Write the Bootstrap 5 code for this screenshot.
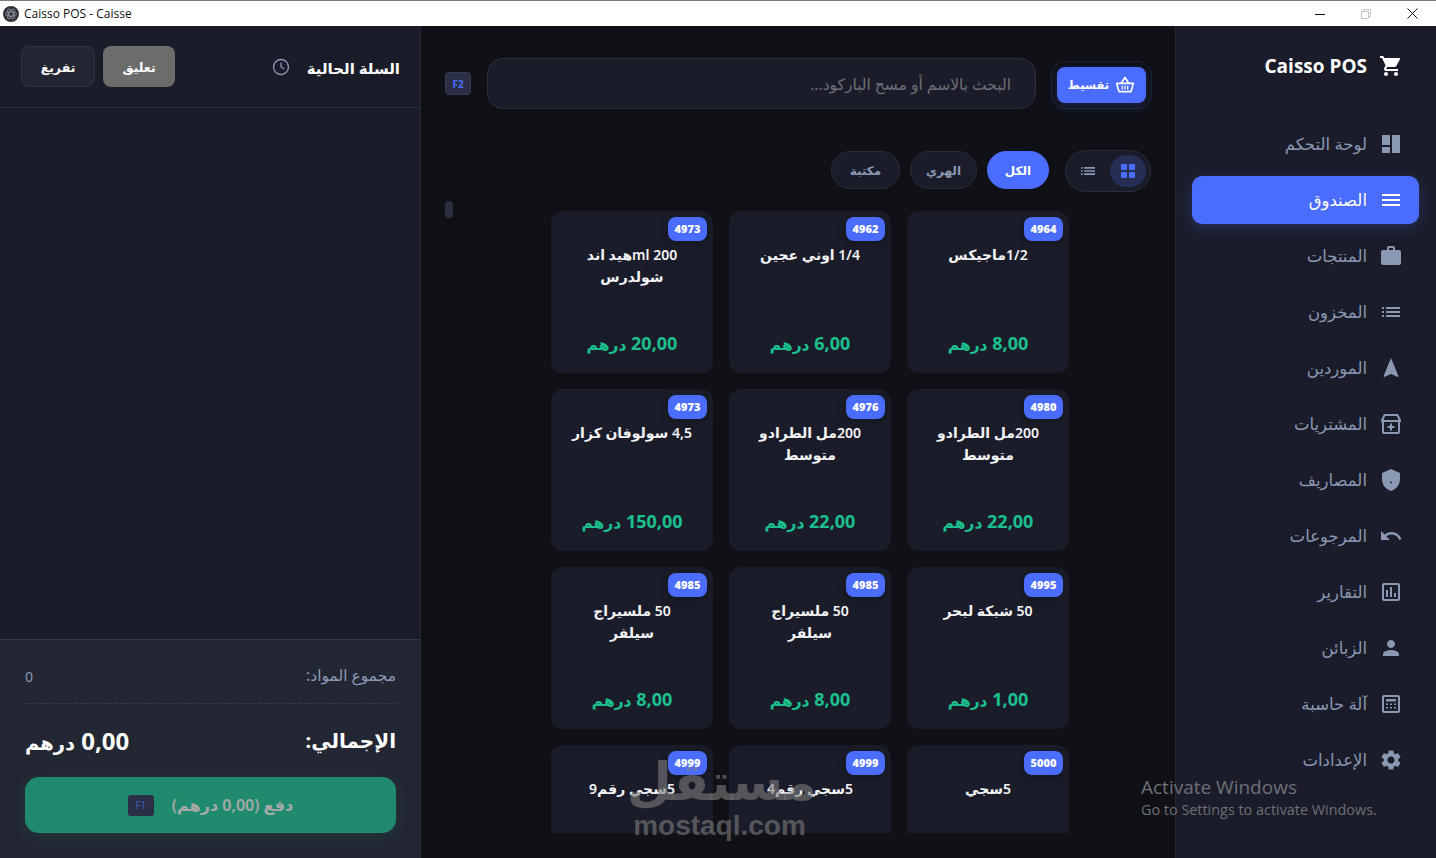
<!DOCTYPE html>
<html lang="ar" dir="rtl">
<head>
<meta charset="utf-8">
<title>Caisso POS - Caisse</title>
<link href="https://cdn.jsdelivr.net/npm/bootstrap@5.3.0/dist/css/bootstrap.min.css" rel="stylesheet">
<style>
html,body{height:100%;margin:0;overflow:hidden}
body{background:#0f1117;font-family:"Noto Sans","DejaVu Sans",sans-serif;color:#fff;width:1436px;height:858px}
.win-bar{height:26px;background:#fff;border-top:1px solid #7a7a7a;color:#111;font:12px "Open Sans",sans-serif;padding-right:1px}
.win-logo{width:16px;height:16px;margin:0 5px 0 3px;flex:none}
.win-ctl{width:46px;height:25px}
.app-body{height:832px}
.side-nav{width:261px;background:#1a1d29;border-left:1px solid #23262f;padding:0 17px 0 16px}
.brand-row{height:80px;padding-right:16px;margin-bottom:14px;color:#fff;font:700 19px "Open Sans",sans-serif;gap:12px}
.brand-row svg{width:24px;height:24px;fill:#fff}
.nav-row{height:48px;margin-bottom:8px;padding:0 16px;border-radius:10px;color:#8b98b4;font-size:16.500px;gap:12px;width:227px;text-decoration:none}
.nav-row svg{width:24px;height:24px;fill:#8b98b4;flex:none}
.nav-row.is-on{background:#4a6cff;color:#fff;box-shadow:0 4px 14px rgba(74,108,255,.25)}
.nav-row.is-on svg{fill:#fff}
.pos-main{width:754px;padding:32px 24px 0;overflow:hidden}
.search-row{height:51px}
.basket-wrap{padding:5px;border:1px solid #1f2330;border-radius:14px;margin:3px -1px 0 15px}
.basket-btn{width:89px;height:36px;padding:0;background:#4a6cff;border:0;border-radius:8px;color:#fff;font-size:11.500px;font-weight:700;box-shadow:0 4px 12px rgba(74,108,255,.2);gap:6px}
.search-box{width:549px;height:51px;background:#1a1d29;border:1px solid #2c303d;border-radius:16px;padding:2px 24px 0;color:#6e6f76;font-size:15.500px}
.kbd-tag{width:26px;height:23px;background:#2a2f45;border:1px solid #353a4e;border-radius:4px;color:#4a6cff;font:700 10px "Open Sans",sans-serif;margin-right:16px}
.filter-row{margin-top:41px;height:42px;gap:10px}
.view-tog{width:86px;height:42px;padding:4px;border:1px solid #2a2e3a;background:#1a1d29;border-radius:21px;margin-left:6px}
.view-on{width:36px;height:32px;border-radius:16px;background:#252f55}
.view-off{width:40px;height:32px;padding-right:4px}
.chip{height:38px;border-radius:19px;background:#1a1d29;border:1px solid #2a2e3a;color:#8b98b4;font-size:12px;font-weight:700;padding:2px 0 0;margin-top:-2px}
.chip.is-on{background:#4a6cff;border-color:#4a6cff;color:#fff}
.chip-all{width:62px}
.chip-a{width:67px}
.chip-b{width:69px}
.scroll-zone{margin-top:9px;height:632px;overflow:hidden}
.card-grid{display:grid;grid-template-columns:repeat(3,162px);grid-auto-rows:162px;gap:16px;padding-top:10px;margin-right:82px}
.prod-card{position:relative;background:#1a1d29;border-radius:12px;padding:33px 20px 0;text-align:center;display:flex;flex-direction:column;align-items:center}
.prod-tag{position:absolute;top:6px;right:6px;height:24px;width:39px;border-radius:8px;background:#4a6cff;color:#fff;font:800 11px/24px "Open Sans",sans-serif;text-align:center;box-shadow:0 2px 8px rgba(0,0,0,.3)}
.prod-name{font-size:14px;font-weight:600;line-height:22px;color:#f3f4f6}
.prod-price{margin-top:auto;margin-bottom:15px;font-size:18px;font-weight:700;color:#1cc08f;line-height:28px;white-space:nowrap}
.cur-txt{font-size:15.500px}
.thumb-bar{width:8px;height:17px;border-radius:4px;background:#2b3040;margin-top:0}
.cart-pane{width:421px;background:#1a1d29;border-right:1px solid #23262f}
.cart-head{height:82px;padding:0 20px 0 21px;border-bottom:1px solid #2a2e3a}
.cart-title{font-size:15px;font-weight:700;margin-left:17px;padding-top:3px}
.hold-btn,.clear-btn{height:41px;border-radius:8px;font-size:12.500px;font-weight:700;color:#fff;padding:3px 0 0}
.hold-btn{width:72px;background:#6b6d6b;border:0}
.clear-btn{width:74px;background:#232733;border:1px solid #2f3340}
.cart-empty{height:531px}
.cart-foot{height:219px;background:#232733;border-top:1px solid #363a46;padding:0 24px 0 25px;color:#8b98b4}
.count-row{height:64px;border-bottom:1px dashed #3a3e4a;font-size:14px;padding-top:9px}
.count-lbl{font-size:15.500px}
.total-row{height:73px;font-size:24px;font-weight:700;color:#fff}
.total-lbl{font-size:20px}
.total-cur{font-size:19.500px}
.pay-btn{width:371px;height:56px;border:0;border-radius:14px;background:#208a6e;color:#a7aaa9;font-size:16px;font-weight:600;box-shadow:0 4px 16px rgba(32,138,110,.15);gap:18px;padding:0}
.pay-key{width:26px;height:21px;background:#2a2f45;border-radius:3px;color:#3f5ec0;font:10px/21px "Open Sans",sans-serif;text-align:center}
.wm-activate{position:absolute;left:1141px;top:775px;direction:ltr;color:#6d7077;font:19px/24px "Open Sans",sans-serif;pointer-events:none}
.wm-activate span{display:block;font-size:14.400px;line-height:22px}
.wm-logo{position:absolute;left:622px;top:745px;width:195px;text-align:center;color:rgba(125,125,125,.6);pointer-events:none}
.wm-ar{font-size:52px;font-weight:700;line-height:70px;display:block;padding-left:24px}
.wm-en{font:700 28px/28px "Liberation Sans",sans-serif;direction:ltr;display:block;margin-top:-3px}
</style>
</head>
<body>
<div class="win-bar d-flex align-items-center justify-content-between" dir="ltr">
  <div class="d-flex align-items-center"><svg class="win-logo" viewBox="0 0 16 16"><circle cx="8" cy="8" r="8" fill="#2f3138"/><g fill="none" stroke="#9aa0a8" stroke-width=".8"><ellipse cx="8" cy="8" rx="5.500" ry="2.200"/><ellipse cx="8" cy="8" rx="5.500" ry="2.200" transform="rotate(60 8 8)"/><ellipse cx="8" cy="8" rx="5.500" ry="2.200" transform="rotate(120 8 8)"/></g></svg><span>Caisso POS - Caisse</span></div>
  <div class="d-flex align-items-center">
    <span class="win-ctl d-flex align-items-center justify-content-center"><svg width="10" height="10" viewBox="0 0 10 10"><path d="M0 5.500h10" stroke="#111"/></svg></span>
    <span class="win-ctl d-flex align-items-center justify-content-center"><svg width="10" height="10" viewBox="0 0 10 10" fill="none" stroke="#c4c4c4"><path d="M.5 2.500h7v7h-7zM2.500 2.500v-2h7v7h-2"/></svg></span>
    <span class="win-ctl d-flex align-items-center justify-content-center"><svg width="11" height="11" viewBox="0 0 11 11"><path d="M.5.5l10 10M10.500.5l-10 10" stroke="#111"/></svg></span>
  </div>
</div>
<div class="app-body d-flex">
  <aside class="side-nav flex-none">
    <div class="brand-row d-flex align-items-center"><svg viewBox="0 0 24 24"><path d="M7 18c-1.100 0-1.990.9-1.990 2S5.900 22 7 22s2-.9 2-2-.9-2-2-2zM1 2v2h2l3.600 7.590-1.350 2.450c-.16.28-.25.61-.25.96 0 1.100.9 2 2 2h12v-2H7.420c-.14 0-.25-.11-.25-.25l.03-.12.9-1.630h7.450c.75 0 1.410-.41 1.750-1.030l3.580-6.490c.08-.14.12-.31.12-.48 0-.55-.45-1-1-1H5.210l-.94-2H1zm16 16c-1.100 0-1.990.9-1.990 2s.89 2 1.990 2 2-.9 2-2-.9-2-2-2z"/></svg><span dir="ltr">Caisso POS</span></div>
    <a class="nav-row d-flex align-items-center"><svg viewBox="0 0 24 24"><path d="M3 13h8V3H3v10zm0 8h8v-6H3v6zm10 0h8V3h-8v18z"/></svg><span>لوحة التحكم</span></a>
    <a class="nav-row is-on d-flex align-items-center"><svg viewBox="0 0 24 24"><path d="M3 18h18v-2H3v2zm0-5h18v-2H3v2zm0-7v2h18V6H3z"/></svg><span>الصندوق</span></a>
    <a class="nav-row d-flex align-items-center"><svg viewBox="0 0 24 24"><path d="M20 6h-4V4c0-1.110-.89-2-2-2h-4c-1.110 0-2 .89-2 2v2H4c-1.110 0-1.990.89-1.990 2L2 19c0 1.110.89 2 2 2h16c1.110 0 2-.89 2-2V8c0-1.110-.89-2-2-2zm-6 0h-4V4h4v2z"/></svg><span>المنتجات</span></a>
    <a class="nav-row d-flex align-items-center"><svg viewBox="0 0 24 24"><path d="M3 13h2v-2H3v2zm0 4h2v-2H3v2zm0-8h2V7H3v2zm4 4h14v-2H7v2zm0 4h14v-2H7v2zM7 7v2h14V7H7z"/></svg><span>المخزون</span></a>
    <a class="nav-row d-flex align-items-center"><svg viewBox="0 0 24 24"><path d="M12 2L4.500 20.290l.71.71L12 18l6.790 3 .71-.71z"/></svg><span>الموردين</span></a>
    <a class="nav-row d-flex align-items-center"><svg viewBox="0 0 24 24"><path fill-rule="evenodd" d="M5 2h14l3 6v2h-1v10a2 2 0 0 1-2 2H5a2 2 0 0 1-2-2V10H2V8zm1.200 2L4.700 7.500v.5h14.600v-.5L17.800 4zM5 10v10h14V10zm6 1.500h2V14h2.500v2H13v2.500h-2V16H8.500v-2H11z"/></svg><span>المشتريات</span></a>
    <a class="nav-row d-flex align-items-center"><svg viewBox="0 0 24 24"><path fill-rule="evenodd" d="M12 1L3 5v6c0 5.550 3.840 10.740 9 12 5.160-1.260 9-6.450 9-12V5l-9-4zm0 12.500a.9.9 0 1 0 0 1.800.9.9 0 0 0 0-1.800z"/></svg><span>المصاريف</span></a>
    <a class="nav-row d-flex align-items-center"><svg viewBox="0 0 24 24"><path d="M12.500 8c-2.650 0-5.050.99-6.900 2.600L2 7v9h9l-3.620-3.620c1.390-1.160 3.160-1.880 5.120-1.880 3.540 0 6.550 2.310 7.600 5.500l2.370-.78C21.080 11.030 17.150 8 12.500 8z"/></svg><span>المرجوعات</span></a>
    <a class="nav-row d-flex align-items-center"><svg viewBox="0 0 24 24"><path fill-rule="evenodd" d="M5 3h14a2 2 0 0 1 2 2v14a2 2 0 0 1-2 2H5a2 2 0 0 1-2-2V5a2 2 0 0 1 2-2zm0 2v14h14V5zm2 5h2v7H7zm4-3h2v10h-2zm4 6h2v4h-2z"/></svg><span>التقارير</span></a>
    <a class="nav-row d-flex align-items-center"><svg viewBox="0 0 24 24"><path d="M12 12c2.210 0 4-1.790 4-4s-1.790-4-4-4-4 1.790-4 4 1.790 4 4 4zm0 2c-2.670 0-8 1.340-8 4v2h16v-2c0-2.660-5.330-4-8-4z"/></svg><span>الزبائن</span></a>
    <a class="nav-row d-flex align-items-center"><svg viewBox="0 0 24 24"><path fill-rule="evenodd" d="M5 3h14a2 2 0 0 1 2 2v14a2 2 0 0 1-2 2H5a2 2 0 0 1-2-2V5a2 2 0 0 1 2-2zm0 2v14h14V5zm2 2h10v2.500H7zm0 4.500h2v1.500H7zm4 0h2v1.500h-2zm4 0h2v1.500h-2zM7 15h2v1.500H7zm4 0h2v1.500h-2zm4 0h2v1.500h-2z"/></svg><span>آلة حاسبة</span></a>
    <a class="nav-row d-flex align-items-center"><svg viewBox="0 0 24 24"><path d="M19.140 12.940c.04-.3.06-.61.06-.94 0-.32-.02-.64-.07-.94l2.030-1.580c.18-.14.23-.41.12-.61l-1.920-3.320c-.12-.22-.37-.29-.59-.22l-2.390.96c-.5-.38-1.030-.7-1.620-.94l-.36-2.540c-.04-.24-.24-.41-.48-.41h-3.840c-.24 0-.43.17-.47.41l-.36 2.540c-.59.24-1.130.57-1.620.94l-2.390-.96c-.22-.08-.47 0-.59.22L2.740 8.870c-.12.21-.08.47.12.61l2.030 1.580c-.05.3-.09.63-.09.94s.02.64.07.94l-2.030 1.580c-.18.14-.23.41-.12.61l1.920 3.320c.12.22.37.29.59.22l2.390-.96c.5.38 1.030.7 1.620.94l.36 2.540c.05.24.24.41.48.41h3.840c.24 0 .44-.17.47-.41l.36-2.540c.59-.24 1.130-.56 1.620-.94l2.390.96c.22.08.47 0 .59-.22l1.920-3.320c.12-.22.07-.47-.12-.61l-2.010-1.580zM12 15.600c-1.980 0-3.600-1.620-3.600-3.600s1.620-3.600 3.600-3.600 3.600 1.620 3.600 3.600-1.620 3.600-3.600 3.600z"/></svg><span>الإعدادات</span></a>
  </aside>
  <main class="pos-main">
    <div class="search-row d-flex align-items-start">
      <div class="basket-wrap"><button class="basket-btn btn d-flex align-items-center justify-content-center"><svg width="20" height="20" viewBox="0 0 24 24" fill="#fff"><path d="M22 9h-4.790l-4.380-6.560a1 1 0 0 0-1.660 0L6.790 9H2a1 1 0 0 0-1 1l.04.27 2.540 9.270A2 2 0 0 0 5.500 21h13a2 2 0 0 0 1.930-1.460l2.540-9.270L23 10a1 1 0 0 0-1-1zM12 4.800L14.800 9H9.200zM18.500 19l-13 .01L3.310 11h17.390zM8 13h1.500v4.500H8zm3.250 0h1.500v4.500h-1.500zm3.250 0H16v4.500h-1.500z"/></svg><span>تقسيط</span></button></div>
      <div class="search-box d-flex align-items-center">البحث بالاسم أو مسح الباركود...</div>
      <div class="kbd-tag d-flex align-items-center justify-content-center align-self-center">F2</div>
    </div>
    <div class="filter-row d-flex align-items-center">
      <div class="view-tog d-flex align-items-center">
        <span class="view-on d-flex align-items-center justify-content-center"><svg width="14" height="14" viewBox="0 0 14 14" fill="#4a6cff"><rect width="6" height="6" rx="1"/><rect x="8" width="6" height="6" rx="1"/><rect y="8" width="6" height="6" rx="1"/><rect x="8" y="8" width="6" height="6" rx="1"/></svg></span>
        <span class="view-off d-flex align-items-center justify-content-center"><svg width="14" height="14" viewBox="3 5 18 14" fill="#8b98b4"><path d="M3 13h2v-2H3v2zm0 4h2v-2H3v2zm0-8h2V7H3v2zm4 4h14v-2H7v2zm0 4h14v-2H7v2zM7 7v2h14V7H7z"/></svg></span>
      </div>
      <button class="chip chip-all is-on btn">الكل</button>
      <button class="chip chip-a btn">الهري</button>
      <button class="chip chip-b btn">مكتبة</button>
    </div>
    <div class="scroll-zone d-flex justify-content-between align-items-start">
      <div class="card-grid">
        <div class="prod-card"><span class="prod-tag">4964</span><div class="prod-name">1/2ماجيكس</div><div class="prod-price">8,00 <span class="cur-txt">درهم</span></div></div>
        <div class="prod-card"><span class="prod-tag">4962</span><div class="prod-name">1/4 اوني عجين</div><div class="prod-price">6,00 <span class="cur-txt">درهم</span></div></div>
        <div class="prod-card"><span class="prod-tag">4973</span><div class="prod-name">200 mlهيد اند شولدرس</div><div class="prod-price">20,00 <span class="cur-txt">درهم</span></div></div>
        <div class="prod-card"><span class="prod-tag">4980</span><div class="prod-name">200مل الطرادو متوسط</div><div class="prod-price">22,00 <span class="cur-txt">درهم</span></div></div>
        <div class="prod-card"><span class="prod-tag">4976</span><div class="prod-name">200مل الطرادو متوسط</div><div class="prod-price">22,00 <span class="cur-txt">درهم</span></div></div>
        <div class="prod-card"><span class="prod-tag">4973</span><div class="prod-name">4,5 سولوفان كزار</div><div class="prod-price">150,00 <span class="cur-txt">درهم</span></div></div>
        <div class="prod-card"><span class="prod-tag">4995</span><div class="prod-name">50 شبكة لبحر</div><div class="prod-price">1,00 <span class="cur-txt">درهم</span></div></div>
        <div class="prod-card"><span class="prod-tag">4985</span><div class="prod-name">50 ملسيراج سيلفر</div><div class="prod-price">8,00 <span class="cur-txt">درهم</span></div></div>
        <div class="prod-card"><span class="prod-tag">4985</span><div class="prod-name">50 ملسيراج سيلفر</div><div class="prod-price">8,00 <span class="cur-txt">درهم</span></div></div>
        <div class="prod-card"><span class="prod-tag">5000</span><div class="prod-name">5سجي</div></div>
        <div class="prod-card"><span class="prod-tag">4999</span><div class="prod-name">5سجي رقم4</div></div>
        <div class="prod-card"><span class="prod-tag">4999</span><div class="prod-name">5سجي رقم9</div></div>
      </div>
      <div class="thumb-bar"></div>
    </div>
  </main>
  <section class="cart-pane">
    <div class="cart-head d-flex align-items-center">
      <span class="cart-title">السلة الحالية</span>
      <svg width="18" height="18" viewBox="0 0 18 18" fill="none" stroke="#8b98b4" stroke-width="1.300"><circle cx="9" cy="9" r="7.500"/><path d="M9 4.500V9l3.200 2"/></svg>
      <div class="d-flex ms-0 me-auto gap-2">
        <button class="hold-btn btn">تعليق</button>
        <button class="clear-btn btn">تفريغ</button>
      </div>
    </div>
    <div class="cart-empty"></div>
    <div class="cart-foot">
      <div class="count-row d-flex align-items-center justify-content-between"><span class="count-lbl">مجموع المواد:</span><span>0</span></div>
      <div class="total-row d-flex align-items-center justify-content-between"><span class="total-lbl">الإجمالي:</span><span>0,00 <span class="total-cur">درهم</span></span></div>
      <button class="pay-btn btn d-flex align-items-center justify-content-center"><span>دفع (0,00 درهم)</span><span class="pay-key">F1</span></button>
    </div>
  </section>
</div>
<div class="wm-logo"><span class="wm-ar">مستقل</span><span class="wm-en">mostaql.com</span></div>
<div class="wm-activate">Activate Windows<span>Go to Settings to activate Windows.</span></div>
</body>
</html>
